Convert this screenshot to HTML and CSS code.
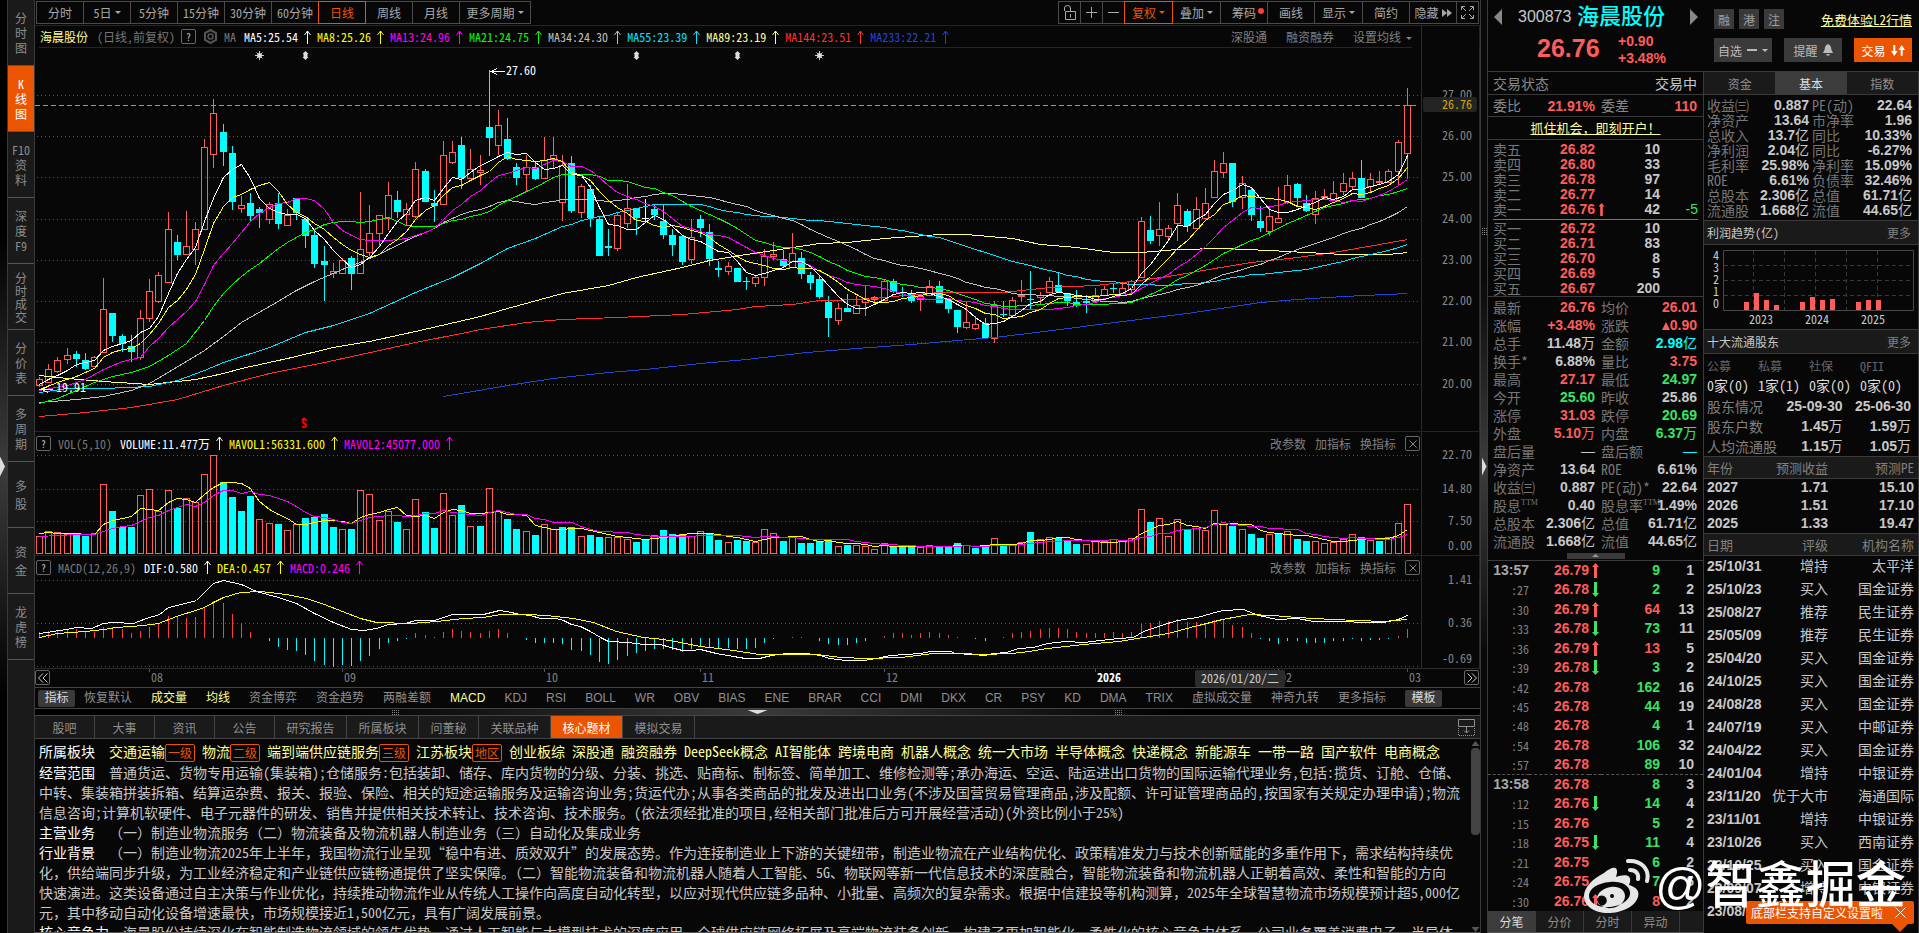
FILE: index.html
```html
<!DOCTYPE html>
<html lang="zh-CN">
<head>
<meta charset="utf-8">
<title>海晨股份 300873</title>
<link rel="stylesheet" href="styles.css">
</head>
<body>
<svg class="defs" aria-hidden="true">
  <symbol id="up" viewBox="0 0 7 14"><path d="M3.5 14V1M.5 5l3-4 3 4" fill="none" stroke="currentColor"/></symbol>
  <symbol id="fat-up" viewBox="0 0 7 15"><path d="M3.5 0 7 4H5v11H2V4H0z" fill="currentColor"/></symbol>
  <symbol id="fat-down" viewBox="0 0 7 15"><path d="M3.5 15 7 11H5V0H2v11H0z" fill="currentColor"/></symbol>
  <symbol id="cross" viewBox="0 0 14 14"><path d="M3.5 3.5l7 7m0-7l-7 7" fill="none" stroke="currentColor"/></symbol>
  <symbol id="grip" viewBox="0 0 8 5"><path d="M0 .5h8M0 2.5h8M0 4.5h8" stroke="currentColor" stroke-dasharray="1 1"/></symbol>
</svg>
<div class="app">
  <div class="gutter"><i class="pull"></i></div>
  <nav class="side">
    <button>分<br>时<br>图</button>
    <button class="on">K<br>线<br>图</button>
    <button>F10<br>资<br>料</button>
    <button>深<br>度<br>F9</button>
    <button class="tight">分<br>时<br>成<br>交</button>
    <button>分<br>价<br>表</button>
    <button>多<br>周<br>期</button>
    <button class="loose">多<br>股</button>
    <button class="loose">资<br>金</button>
    <button>龙<br>虎<br>榜</button>
  </nav>

  <main class="main">
    <div class="toolbar">
      <div class="btns periods">
        <button>分时</button><button>5日 <i class="caret"></i></button><button>5分钟</button><button>15分钟</button><button>30分钟</button><button>60分钟</button><button class="on">日线</button><button>周线</button><button>月线</button><button class="wide">更多周期 <i class="caret"></i></button>
      </div>
      <div class="btns tools">
        <button class="sq" aria-label="解锁"><svg width="14" height="16" viewBox="0 0 14 16" fill="none" stroke="currentColor"><path d="M1.5 6V3Q1.5.5 4.5.5T7.5 3V6M2.5 6.5H12.5V14.5H2.5zM7.5 9V12.5"/></svg></button><button class="sq" aria-label="放大"><svg width="11" height="11" viewBox="0 0 11 11" stroke="currentColor"><path d="M5.5 0v11M0 5.5h11"/></svg></button><button class="sq" aria-label="缩小"><svg width="11" height="11" viewBox="0 0 11 11" stroke="currentColor"><path d="M0 5.5h11"/></svg></button><button class="on mid">复权 <i class="caret"></i></button><button class="mid">叠加 <i class="caret"></i></button><button class="dot">筹码</button><button>画线</button><button class="mid">显示 <i class="caret"></i></button><button>简约</button><button>隐藏<svg width="10" height="8" viewBox="0 0 10 8"><path d="M0 0l5 4-5 4zM5 0l5 4-5 4z" fill="currentColor"/></svg></button><button class="sq" aria-label="全屏"><svg width="13" height="13" viewBox="0 0 13 13" fill="none" stroke="currentColor"><path d="M.5 4V.5H4M9 .5h3.5V4M12.5 9v3.5H9M4 12.5H.5V9M1 1l4 4M12 1L8 5M12 12L8 8M1 12l4-4"/></svg></button>
      </div>
    </div>

    <div class="bar">
      <div class="legend ruled">
        <b class="name">海晨股份</b><span class="mute">(日线,前复权)</span><button class="ask">?</button>
        <svg class="gear" width="15" height="15" viewBox="0 0 15 15" fill="none" stroke="currentColor"><path d="M7.5 1l5.500 3v7l-5.500 3L2 11V4z" stroke-width="2"/><circle cx="7.5" cy="7.5" r="2.5" stroke-width="1.5"/></svg>
        <span class="mute ma">MA</span>
        <span class="v white">MA5:25.54<svg><use href="#up"/></svg></span><span class="v yellow">MA8:25.26<svg><use href="#up"/></svg></span><span class="v magenta">MA13:24.96<svg><use href="#up"/></svg></span><span class="v lime">MA21:24.75<svg><use href="#up"/></svg></span><span class="v silver">MA34:24.30<svg><use href="#up"/></svg></span><span class="v aqua">MA55:23.39<svg><use href="#up"/></svg></span><span class="v cream">MA89:23.19<svg><use href="#up"/></svg></span><span class="v scarlet">MA144:23.51<svg><use href="#up"/></svg></span><span class="v blue">MA233:22.21<svg><use href="#up"/></svg></span>
        <div class="links first"><a href="#">深股通</a><a href="#">融资融券</a><a href="#">设置均线<i class="caret"></i></a></div>
      </div>
      <div class="axis"></div>
    </div>
    <svg id="price" class="plot grow" role="img" aria-label="日K线"></svg>

    <div class="bar line">
      <div class="legend">
        <button class="ask">?</button><span class="mute vt">VOL(5,10)</span>
        <span class="v white">VOLUME:11.477万<svg><use href="#up"/></svg></span><span class="v yellow">MAVOL1:56331.600<svg><use href="#up"/></svg></span><span class="v magenta">MAVOL2:45077.000<svg><use href="#up"/></svg></span>
        <div class="links"><a href="#">改参数</a><a href="#">加指标</a><a href="#">换指标</a><button class="ask" aria-label="关闭"><svg width="14" height="14"><use href="#cross"/></svg></button></div>
      </div>
      <div class="axis"></div>
    </div>
    <svg id="volume" class="plot vol" role="img" aria-label="成交量"></svg>

    <div class="bar line">
      <div class="legend">
        <button class="ask">?</button><span class="mute vt">MACD(12,26,9)</span>
        <span class="v white">DIF:0.580<svg><use href="#up"/></svg></span><span class="v yellow">DEA:0.457<svg><use href="#up"/></svg></span><span class="v magenta">MACD:0.246<svg><use href="#up"/></svg></span>
        <div class="links"><a href="#">改参数</a><a href="#">加指标</a><a href="#">换指标</a><button class="ask" aria-label="关闭"><svg width="14" height="14"><use href="#cross"/></svg></button></div>
      </div>
      <div class="axis"></div>
    </div>
    <svg id="macd" class="plot macd" role="img" aria-label="MACD"></svg>

    <div class="dates">
      <svg id="dates" class="plot"></svg>
      <button class="ask prev" aria-label="向前"><svg width="14" height="14" fill="none" stroke="currentColor"><path d="M7 2.5L2.5 7 7 11.5M11.5 2.5L7 7l4.5 4.5"/></svg></button>
      <button class="ask next" aria-label="向后"><svg width="14" height="14" fill="none" stroke="currentColor"><path d="M7 2.5L11.5 7 7 11.5M2.5 2.5L7 7l-4.5 4.5"/></svg></button>
    </div>

    <div class="indic">
      <button class="chip">指标</button><a href="#" class="first">恢复默认</a><a href="#" class="hot">成交量</a><a href="#" class="hot">均线</a><a href="#">资金博弈</a><a href="#">资金趋势</a><a href="#">两融差额</a><a href="#" class="hot">MACD</a><a href="#">KDJ</a><a href="#">RSI</a><a href="#">BOLL</a><a href="#">WR</a><a href="#">OBV</a><a href="#">BIAS</a><a href="#">ENE</a><a href="#">BRAR</a><a href="#">CCI</a><a href="#">DMI</a><a href="#">DKX</a><a href="#">CR</a><a href="#">PSY</a><a href="#">KD</a><a href="#">DMA</a><a href="#">TRIX</a><a href="#">虚拟成交量</a><a href="#">神奇九转</a><a href="#">更多指标</a><button class="chip">模板</button>
    </div>

    <div class="hsplit"><svg width="8" height="5"><use href="#grip"/></svg><i></i><svg width="8" height="5"><use href="#grip"/></svg></div>

    <div class="tabs">
      <button>股吧</button><button>大事</button><button>资讯</button><button>公告</button><button class="w">研究报告</button><button class="w">所属板块</button><button>问董秘</button><button class="w">关联品种</button><button class="w on">核心题材</button><button class="w">模拟交易</button>
      <svg class="dock" width="17" height="17" viewBox="0 0 17 17" fill="none" stroke="currentColor"><path d="M.5.5h16v7H.5zM8.5 7.5V14M6 11.5l2.5 2.5 2.5-2.5"/><path d="M.5 9v7.5h16V9" stroke-dasharray="1 1"/></svg>
    </div>

    <section class="info">
      <div class="lines">
        <p class="cream"><b>所属板块</b>交通运输<em>一级</em> 物流<em>二级</em> 端到端供应链服务<em>三级</em> 江苏板块<em>地区</em> 创业板综 深股通 融资融券 DeepSeek概念 AI智能体 跨境电商 机器人概念 统一大市场 半导体概念 快递概念 新能源车 一带一路 国产软件 电商概念</p>
        <p><b>经营范围</b>普通货运、货物专用运输(集装箱);仓储服务:包括装卸、储存、库内货物的分级、分装、挑选、贴商标、制标签、简单加工、维修检测等;承办海运、空运、陆运进出口货物的国际运输代理业务,包括:揽货、订舱、仓储、<br>中转、集装箱拼装拆箱、结算运杂费、报关、报验、保险、相关的短途运输服务及运输咨询业务;货运代办;从事各类商品的批发及进出口业务(不涉及国营贸易管理商品,涉及配额、许可证管理商品的,按国家有关规定办理申请);物流<br>信息咨询;计算机软硬件、电子元器件的研发、销售并提供相关技术转让、技术咨询、技术服务。(依法须经批准的项目,经相关部门批准后方可开展经营活动)(外资比例小于25%)</p>
        <p><b>主营业务</b>（一）制造业物流服务（二）物流装备及物流机器人制造业务（三）自动化及集成业务</p>
        <p><b>行业背景</b>（一）制造业物流2025年上半年，我国物流行业呈现“稳中有进、质效双升”的发展态势。作为连接制造业上下游的关键纽带，制造业物流在产业结构优化、政策精准发力与技术创新赋能的多重作用下，需求结构持续优<br>化，供给端同步升级，为工业经济稳定和产业链供应链畅通提供了坚实保障。（二）智能物流装备和物流机器人随着人工智能、5G、物联网等新一代信息技术的深度融合，智能物流装备和物流机器人正朝着高效、柔性和智能的方向<br>快速演进。这类设备通过自主决策与作业优化，持续推动物流作业从传统人工操作向高度自动化转型，以应对现代供应链多品种、小批量、高频次的复杂需求。根据中信建投等机构测算，2025年全球智慧物流市场规模预计超5,000亿<br>元，其中移动自动化设备增速最快，市场规模接近1,500亿元，具有广阔发展前景。</p>
        <p><b>核心竞争力</b>海晨股份持续深化在智能制造物流领域的领先优势，通过人工智能与大模型技术的深度应用、全球供应链网络拓展及高端物流装备创新，构建了更加智能化、柔性化的核心竞争力体系。公司业务覆盖消费电子、半导体</p>
      </div>
      <div class="scroll"><i class="sup"></i><i class="thumb"></i><i class="sdn"></i></div>
    </section>
  </main>

  <div class="vsplit"><svg width="5" height="8" viewBox="0 0 5 8"><path d="M0 .5h5M0 2.5h5M0 4.5h5M0 6.5h5" stroke="#888" stroke-dasharray="1 1"/></svg><i class="pull"></i></div>

  <aside class="quote">
    <header class="head">
      <div class="title">
        <button class="arrow l" aria-label="上一只"></button><span class="code">300873</span><h1>海晨股份</h1><button class="arrow r" aria-label="下一只"></button>
        <strong class="last">26.76</strong>
        <div class="chg"><span>+0.90</span><span>+3.48%</span></div>
      </div>
      <div class="acts">
        <div class="row"><button class="tag">融</button><button class="tag">港</button><button class="tag">注</button><a href="#">免费体验L2行情</a></div>
        <div class="row two"><button>自选<svg width="10" height="2"><path d="M0 1h10" stroke="currentColor" stroke-width="2"/></svg><i class="caret"></i></button><button>提醒<svg width="10" height="12" viewBox="0 0 10 12"><path d="M5 0C7.5 1 8.300 3 8.300 5.500L10 9H0l1.700-3.500C1.700 3 2.500 1 5 0zM3.500 10h3v1.500h-3z" fill="currentColor"/></svg></button><button class="trade">交易<svg width="14" height="11" viewBox="0 0 14 11"><path d="M2.300 0h2v6h2.300L3.300 11 0 6h2.300zM9.700 11h2V5H14l-3.300-5-3.300 5h2.300z" fill="currentColor"/></svg></button></div>
      </div>
    </header>

    <div class="cols">
      <section class="left">
        <div class="state"><span>交易状态</span><span class="lite">交易中</span></div>
        <div class="state pair"><span>委比</span><b class="red">21.91%</b><span>委差</span><b class="red">110</b></div>
        <div class="ad"><a href="#">抓住机会，即刻开户！</a></div>
        <div class="book">
          <table>
            <tr><th>卖五</th><td class="red">26.82</td><td></td><td>10</td><td></td></tr>
            <tr><th>卖四</th><td class="red">26.80</td><td></td><td>33</td><td></td></tr>
            <tr><th>卖三</th><td class="red">26.78</td><td></td><td>97</td><td></td></tr>
            <tr><th>卖二</th><td class="red">26.77</td><td></td><td>14</td><td></td></tr>
            <tr><th>卖一</th><td class="red">26.76</td><td class="red"><svg width="7" height="13"><use href="#fat-up"/></svg></td><td>42</td><td class="green thin">-5</td></tr>
          </table>
          <table>
            <tr><th>买一</th><td class="red">26.72</td><td></td><td>10</td><td></td></tr>
            <tr><th>买二</th><td class="red">26.71</td><td></td><td>83</td><td></td></tr>
            <tr><th>买三</th><td class="red">26.70</td><td></td><td>8</td><td></td></tr>
            <tr><th>买四</th><td class="red">26.69</td><td></td><td>5</td><td></td></tr>
            <tr><th>买五</th><td class="red">26.67</td><td></td><td>200</td><td></td></tr>
          </table>
        </div>
        <table class="stats">
          <tr><th>最新</th><td class="red">26.76</td><th>均价</th><td class="red">26.01</td></tr>
          <tr><th>涨幅</th><td class="red">+3.48%</td><th>涨跌</th><td class="red"><svg width="8" height="8"><path d="M4 0l4 8H0z" fill="currentColor"/></svg>0.90</td></tr>
          <tr><th>总手</th><td>11.48<u>万</u></td><th>金额</th><td class="cyan">2.98<u>亿</u></td></tr>
          <tr><th>换手*</th><td>6.88%</td><th>量比</th><td class="red">3.75</td></tr>
          <tr><th>最高</th><td class="red">27.17</td><th>最低</th><td class="green">24.97</td></tr>
          <tr><th>今开</th><td class="green">25.60</td><th>昨收</th><td>25.86</td></tr>
          <tr><th>涨停</th><td class="red">31.03</td><th>跌停</th><td class="green">20.69</td></tr>
          <tr><th>外盘</th><td class="red">5.10<u>万</u></td><th>内盘</th><td class="green">6.37<u>万</u></td></tr>
          <tr><th>盘后量</th><td><u>—</u></td><th>盘后额</th><td class="cyan"><u>—</u></td></tr>
          <tr><th>净资产</th><td>13.64</td><th>ROE</th><td>6.61%</td></tr>
          <tr><th>收益㈢</th><td>0.887</td><th>PE(动)*</th><td>22.64</td></tr>
          <tr><th>股息<sup>TTM</sup></th><td>0.40</td><th>股息率<sup>TTM</sup></th><td>1.49%</td></tr>
          <tr><th>总股本</th><td>2.306<u>亿</u></td><th>总值</th><td>61.71<u>亿</u></td></tr>
          <tr><th>流通股</th><td>1.668<u>亿</u></td><th>流值</th><td>44.65<u>亿</u></td></tr>
        </table>
        <div class="fold"><button aria-label="收起"><i></i></button></div>
        <table class="ticks">
          <tr><th class="hr">13:57</th><td class="red">26.79</td><td class="red"><svg width="7" height="15"><use href="#fat-up"/></svg></td><td class="green">9</td><td>1</td></tr>
          <tr><th>:27</th><td class="red">26.78</td><td class="green"><svg width="7" height="15"><use href="#fat-down"/></svg></td><td class="green">2</td><td>2</td></tr>
          <tr><th>:30</th><td class="red">26.79</td><td class="red"><svg width="7" height="15"><use href="#fat-up"/></svg></td><td class="red">64</td><td>13</td></tr>
          <tr><th>:33</th><td class="red">26.78</td><td class="green"><svg width="7" height="15"><use href="#fat-down"/></svg></td><td class="green">73</td><td>11</td></tr>
          <tr><th>:36</th><td class="red">26.79</td><td class="red"><svg width="7" height="15"><use href="#fat-up"/></svg></td><td class="red">13</td><td>5</td></tr>
          <tr><th>:39</th><td class="red">26.78</td><td class="green"><svg width="7" height="15"><use href="#fat-down"/></svg></td><td class="green">3</td><td>2</td></tr>
          <tr><th>:42</th><td class="red">26.78</td><td></td><td class="green">162</td><td>16</td></tr>
          <tr><th>:45</th><td class="red">26.78</td><td></td><td class="green">44</td><td>19</td></tr>
          <tr><th>:48</th><td class="red">26.78</td><td></td><td class="green">4</td><td>1</td></tr>
          <tr><th>:54</th><td class="red">26.78</td><td></td><td class="green">106</td><td>32</td></tr>
          <tr><th>:57</th><td class="red">26.78</td><td></td><td class="green">89</td><td>10</td></tr>
          <tr class="cut"><th class="hr">13:58</th><td class="red">26.78</td><td></td><td class="green">8</td><td>3</td></tr>
          <tr><th>:12</th><td class="red">26.76</td><td class="green"><svg width="7" height="15"><use href="#fat-down"/></svg></td><td class="green">14</td><td>4</td></tr>
          <tr><th>:15</th><td class="red">26.76</td><td></td><td class="green">5</td><td>2</td></tr>
          <tr><th>:18</th><td class="red">26.75</td><td class="green"><svg width="7" height="15"><use href="#fat-down"/></svg></td><td class="green">11</td><td>4</td></tr>
          <tr><th>:21</th><td class="red">26.75</td><td></td><td class="green">6</td><td>2</td></tr>
          <tr><th>:24</th><td class="red">26.75</td><td></td><td class="green">7</td><td>6</td></tr>
          <tr><th>:30</th><td class="red">26.76</td><td class="red"><svg width="7" height="15"><use href="#fat-up"/></svg></td><td class="red">8</td><td>2</td></tr>
        </table>
        <div class="foot"><button class="on">分笔</button><button>分价</button><button>分时</button><button>异动</button></div>
      </section>

      <section class="right">
        <div class="seg"><button>资金</button><button class="on">基本</button><button>指数</button></div>
        <table class="stats fin">
          <tr><th>收益㈢</th><td>0.887</td><th>PE(动)</th><td>22.64</td></tr>
          <tr><th>净资产</th><td>13.64</td><th>市净率</th><td>1.96</td></tr>
          <tr><th>总收入</th><td>13.7<u>亿</u></td><th>同比</th><td>10.33%</td></tr>
          <tr><th>净利润</th><td>2.04<u>亿</u></td><th>同比</th><td>-6.27%</td></tr>
          <tr><th>毛利率</th><td>25.98%</td><th>净利率</th><td>15.09%</td></tr>
          <tr><th>ROE</th><td>6.61%</td><th>负债率</th><td>32.46%</td></tr>
          <tr><th>总股本</th><td>2.306<u>亿</u></td><th>总值</th><td>61.71<u>亿</u></td></tr>
          <tr><th>流通股</th><td>1.668<u>亿</u></td><th>流值</th><td>44.65<u>亿</u></td></tr>
        </table>
        <div class="cap"><span>利润趋势(亿)</span><a href="#">更多</a></div>
        <svg class="profit" viewBox="0 0 214 84" font-size="12">
          <g fill="none" stroke="#484848"><path d="M19.5 5.5h190v60h-190z"/><path d="M20 20.5h189M20 35.5h189M20 50.5h189M49.5 6v59M80.5 6v59M111.5 6v59M142.5 6v59M173.5 6v59" stroke-dasharray="4 3" stroke="#3a3a3a"/></g>
          <path fill="#ff5c5c" d="M40 57h5v8h-5zM50 48h5v17h-5zM60 55h5v10h-5zM70 60h5v5h-5zM96 57h5v8h-5zM106 52h5v13h-5zM116 55h5v10h-5zM126 54h5v11h-5zM152 57h5v8h-5zM162 55h5v10h-5zM172 55h5v10h-5z"/>
          <g fill="#c8c8c8" text-anchor="middle"><text x="12" y="15">4</text><text x="12" y="27">3</text><text x="12" y="39">2</text><text x="12" y="51">1</text><text x="12" y="63">0</text><text x="57" y="79">2023</text><text x="113" y="79">2024</text><text x="169" y="79">2025</text></g>
        </svg>
        <div class="cap"><span>十大流通股东</span><a href="#">更多</a></div>
        <dl class="funds"><div><dt>公募</dt><dd>0家(0)</dd></div><div><dt>私募</dt><dd>1家(1)</dd></div><div><dt>社保</dt><dd>0家(0)</dd></div><div><dt>QFII</dt><dd>0家(0)</dd></div></dl>
        <table class="holders">
          <tr><th>股东情况</th><td>25-09-30</td><td>25-06-30</td></tr>
          <tr><th>股东户数</th><td>1.45<u>万</u></td><td>1.59<u>万</u></td></tr>
          <tr><th>人均流通股</th><td>1.15<u>万</u></td><td>1.05<u>万</u></td></tr>
        </table>
        <table class="list">
          <thead><tr><th>年份</th><th>预测收益</th><th>预测PE</th></tr></thead>
          <tbody><tr><td>2027</td><td>1.71</td><td>15.10</td></tr><tr><td>2026</td><td>1.51</td><td>17.10</td></tr><tr><td>2025</td><td>1.33</td><td>19.47</td></tr></tbody>
        </table>
        <table class="list rate">
          <thead><tr><th>日期</th><th>评级</th><th>机构名称</th></tr></thead>
          <tbody>
          <tr><td>25/10/31</td><td>增持</td><td>太平洋</td></tr><tr><td>25/10/23</td><td>买入</td><td>国金证券</td></tr><tr><td>25/08/27</td><td>推荐</td><td>民生证券</td></tr><tr><td>25/05/09</td><td>推荐</td><td>民生证券</td></tr><tr><td>25/04/20</td><td>买入</td><td>国金证券</td></tr><tr><td>24/10/25</td><td>买入</td><td>国金证券</td></tr><tr><td>24/08/28</td><td>买入</td><td>国金证券</td></tr><tr><td>24/07/19</td><td>买入</td><td>中邮证券</td></tr><tr><td>24/04/22</td><td>买入</td><td>国金证券</td></tr><tr><td>24/01/04</td><td>增持</td><td>中银证券</td></tr><tr><td>23/11/20</td><td>优于大市</td><td>海通国际</td></tr><tr><td>23/11/01</td><td>增持</td><td>中银证券</td></tr><tr><td>23/10/26</td><td>买入</td><td>西南证券</td></tr><tr><td>23/10/25</td><td>买入</td><td>国金证券</td></tr><tr><td>23/09/07</td><td>增持</td><td>中银证券</td></tr><tr><td>23/08/</td><td></td><td></td></tr>
          </tbody>
        </table>
      </section>
    </div>
    <div class="tip"><span>底部栏支持自定义设置啦</span><button aria-label="关闭"><svg width="11" height="11"><path d="M.5.5l10 10m0-10l-10 10" stroke="currentColor"/></svg></button></div>
    <div class="mark">
      <svg width="68" height="56" viewBox="0 0 68 56" fill="none"><path fill="#e6e6e6" fill-rule="evenodd" d="M21 15C28 9 35 7 34 15l-1 4c7-3 16-3 14 5l-1 3c7 2 11 6 9 12C52 49 38 55 25 55 11 55 1 48 1 38 1 30 9 21 21 15zM27 24C14 25 6 31 6 38s9 12 21 11 21-8 20-15-9-11-20-10zM28 29c8-1 14 3 14 9s-6 11-13 12-15-3-15-9 6-11 14-12zM21 38a5 5 0 1 0 .1 9 5 5 0 0 0-.1-9zM29 36a2 2 0 1 0 .1 4 2 2 0 0 0-.1-4z"/><path stroke="#e6e6e6" stroke-width="4" stroke-linecap="round" d="M45 3c13-1 22 8 19 20M47 12c6 0 9 4 8 9"/></svg>
      <span>@智鑫掘金</span>
    </div>
  </aside>
</div>
<script src="chart.js"></script>
</body>
</html>
```
FILE: styles.css
```css
* { box-sizing: border-box; }
:root {
  --bg: #070707;
  --panel: #1a1a1a;
  --line: #3a3a3a;
  --faint: #242424;
  --text: #c8c8c8;
  --mute: #808080;
  --red: #ff5c5c;
  --green: #39e365;
  --orange: #eb5502;
  --cjk: "Noto Sans Mono CJK SC", "Noto Sans CJK SC", sans-serif;
  --num: "Liberation Sans", "Noto Sans CJK SC", sans-serif;
}
body { margin: 0; background: var(--bg); color: var(--text); font: 12px/15px var(--cjk); }
button { margin: 0; padding: 0; border: 0; background: none; color: inherit; font: inherit; }
a { color: inherit; text-decoration: none; }
h1, p, dl, dd { margin: 0; }
table { border-collapse: collapse; border-spacing: 0; width: 100%; }
th { font-weight: 400; text-align: left; padding: 0; }
td { padding: 0; }
u { text-decoration: none; font-weight: 400; }
.defs { position: absolute; width: 0; height: 0; }

.app { display: grid; grid-template-columns: 8px 27px minmax(0, 1fr) 8px 431px; height: 100vh; overflow: hidden; }

.gutter { display: flex; align-items: center; border-right: 1px solid var(--line); background: linear-gradient(#000 25%, #3c3c3c 50%, #000 75%); }
.pull { width: 5px; height: 20px; background: #ddd; clip-path: polygon(0 0, 100% 50%, 0 100%); }

.side { background: var(--panel); border-right: 1px solid var(--line); }
.side button { display: block; width: 100%; height: 66px; border-bottom: 1px solid #555; color: #8c8c8c; line-height: 15px; }
.side .on { background: var(--orange); color: #fff; }
.side .tight { line-height: 13px; }
.side .loose { line-height: 18px; }

.main { display: flex; flex-direction: column; min-width: 0; }
.toolbar { display: flex; justify-content: space-between; height: 26px; padding: 1px 1px 0 0; border-bottom: 1px solid var(--faint); }
.btns { display: flex; height: 23px; padding-left: 1px; }
.btns button { width: 48px; margin-left: -1px; border: 1px solid #4a4a4a; color: #a8a8a8; white-space: nowrap; display: flex; align-items: center; justify-content: center; gap: 3px; }
.periods button:first-child { margin-left: 0; }
.btns .wide { width: 72px; }
.btns .sq { width: 23px; }
.btns .mid { width: 49px; }
.btns .on { border-color: var(--orange); color: var(--orange); position: relative; }
.btns .dot { position: relative; }
.dot::after { content: ""; position: absolute; right: 3px; top: 6px; width: 6px; height: 6px; border-radius: 50%; background: #ff3b3b; }
.caret { display: inline-block; border: 3px solid transparent; border-top-color: currentColor; border-bottom: 0; vertical-align: middle; }

.bar { display: flex; height: 22px; flex: none; }
.line { border-top: 1px solid var(--faint); height: 24px; }
.legend { flex: 1; display: flex; align-items: center; min-width: 0; padding-left: 1px; white-space: nowrap; }
.line .legend { padding-bottom: 1px; }
.axis { width: 59px; border-left: 1px solid #2c2c2c; border-right: 1px solid var(--faint); }
.ruled { border-bottom: 1px solid var(--faint); margin: 0 9px 0 4px; }
.name { color: #ffff99; font-weight: 400; margin-right: 9px; }
.mute { color: #777; }
.ask { width: 15px; height: 15px; border: 1px solid #666; border-radius: 2px; color: #ccc; font-size: 10px; line-height: 13px; display: grid; place-items: center; flex: none; }
.ruled .ask { margin: 0 7px 0 6px; }
.links .ask { color: #888; }
.gear { color: #555; margin-right: 6px; }
.ma { margin-right: 8px; }
.vt { margin: 0 8px 0 7px; }
.v { display: inline-flex; align-items: center; margin-right: 6px; }
.v svg { width: 7px; height: 14px; margin-left: 6px; }
.links { margin-left: auto; display: flex; align-items: center; gap: 9px; color: #808080; padding-right: 1px; }
.links.first { gap: 19px; padding-right: 0; }
.links .caret { margin-left: 5px; }
.white { color: #fff; } .yellow { color: #ff0; } .magenta { color: #f0f; } .lime { color: #0f0; }
.silver { color: #c0c0c0; } .aqua { color: #00e5ff; } .cream { color: #ffff99; } .scarlet { color: #ff3030; } .blue { color: #2146d0; }
.red { color: var(--red); } .green { color: var(--green); } .cyan { color: #0ff; } .lite { color: var(--text); }

.plot { display: block; width: 100%; flex: none; overflow: visible; font: 12px var(--cjk); }
.plot.grow { flex: 1 1 0; height: 0; min-height: 0; }
.plot.vol { height: 100px; }
.plot.macd { height: 89px; }
.dates { position: relative; height: 19px; flex: none; border-top: 1px solid #2c2c2c; }
.dates .plot { height: 18px; }
.dates .ask { position: absolute; top: 1px; left: 0; }
.dates .next { left: auto; right: 1px; }

.indic { display: flex; align-items: center; gap: 19px; height: 21px; flex: none; padding-left: 3px; border-top: 1px solid #444; color: #909090; font-family: var(--num); white-space: nowrap; }
.indic .first { margin-left: -10px; }
.indic .hot { color: #ffff99; }
.chip { width: 37px; height: 17px; background: #3a3a3a; border-radius: 2px; color: #ddd; }

.hsplit { display: flex; align-items: center; justify-content: space-between; height: 8px; flex: none; padding: 0 357px; color: #888; border-top: 1px solid #444; border-bottom: 1px solid #444; background: linear-gradient(90deg, #000 20%, #3a3a3a 50%, #000 80%); }
.hsplit i { width: 20px; height: 4px; background: #ddd; clip-path: polygon(0 0, 100% 0, 50% 100%); }

.tabs { display: flex; align-items: stretch; height: 23px; flex: none; background: var(--panel); border-bottom: 1px solid #444; color: #909090; }
.tabs button { width: 60px; border-right: 1px solid #444; }
.tabs .w { width: 72px; }
.tabs .on { background: var(--orange); color: #fff; }
.dock { margin: 3px 5px 0 auto; }

.info { height: 194px; flex: none; display: flex; overflow: hidden; border-bottom: 1px solid #555; font-size: 14px; line-height: 20px; padding: 2px 0 0 4px; white-space: nowrap; }
.lines { flex: 1; min-width: 0; overflow: hidden; }
.lines b { font-weight: 400; color: #fff; margin-right: 14px; }
.lines em { display: inline-block; font-style: normal; font-size: 12px; line-height: 16px; height: 18px; padding: 0 2px; border: 1px solid var(--orange); border-radius: 2px; color: var(--orange); vertical-align: middle; }
.scroll { width: 9px; display: flex; flex-direction: column; align-items: center; gap: 2px; }
.scroll i { width: 8px; height: 5px; background: #555; clip-path: polygon(50% 0, 100% 100%, 0 100%); }
.scroll .thumb { height: 87px; width: 9px; border-radius: 4px; clip-path: none; background: #444; }
.scroll .sdn { margin-top: auto; clip-path: polygon(0 0, 100% 0, 50% 100%); }

.vsplit { display: flex; flex-direction: column; align-items: center; justify-content: center; gap: 221px; border: solid var(--line); border-width: 0 1px; background: linear-gradient(#0a0a0a 30%, #3c3c3c 50%, #0a0a0a 70%); }
.vsplit svg { margin-top: -229px; }

.quote { position: relative; display: flex; flex-direction: column; min-height: 0; }
.head { display: grid; grid-template-columns: 216px 1fr; height: 71px; flex: none; }
.title { display: grid; grid-template-columns: 30px 54px 1fr 30px; align-items: center; grid-template-rows: 34px 34px; }
.arrow { width: 8px; height: 16px; margin: 0 6px; background: #888; }
.arrow.l { clip-path: polygon(0 50%, 100% 0, 100% 100%); }
.arrow.r { justify-self: end; clip-path: polygon(0 0, 100% 50%, 0 100%); }
.code { font: 16px var(--num); }
.title h1 { font: 500 22px/32px var(--num); color: #0ff; padding-left: 5px; }
.last { grid-column: 1 / 3; grid-row: 2; font: 700 25px/28px var(--num); color: var(--red); padding-left: 49px; padding-bottom: 6px; }
.chg { grid-column: 3 / 5; grid-row: 2; padding-left: 46px; font: 700 14px/17px var(--num); color: var(--red); display: grid; padding-bottom: 2px; }
.acts { padding: 9px 7px 0 10px; }
.row { display: flex; gap: 5px; align-items: center; }
.row a { margin-left: auto; color: #ffff99; text-decoration: underline; font-size: 13px; }
.row button { height: 24px; width: 58px; background: var(--line); color: #bbb; display: flex; align-items: center; justify-content: center; gap: 5px; }
.row .tag { width: 20px; height: 20px; color: #a0a0a0; }
.row.two { justify-content: space-between; margin-top: 9px; }
.row .trade { background: var(--orange); color: #fff; }

.cols { display: grid; grid-template-columns: 216px minmax(0, 1fr); flex: 1; min-height: 0; }
.left { display: flex; flex-direction: column; border-right: 1px solid var(--line); min-height: 0; }
.state { display: flex; justify-content: space-between; align-items: center; height: 23px; padding: 0 6px 0 5px; border-top: 1px solid var(--line); font-size: 14px; color: #888; }
.pair { display: grid; grid-template-columns: 28px 74px 34px 1fr; height: 22px; }
.pair b { font: 700 14px var(--num); text-align: right; }
.pair span:nth-of-type(2) { padding-left: 6px; }
.ad { height: 23px; border-top: 1px solid var(--line); text-align: center; font-size: 13px; line-height: 22px; color: #ffff99; }
.ad a { text-decoration: underline; }
.book { border-top: 1px solid var(--line); padding: 2px 5px 0; }
.book table { table-layout: fixed; }
.book table + table { border-top: 1px solid #777; border-collapse: separate; margin-top: 2px; padding-top: 1px; }
.book th, .stats th { font-size: 14px; line-height: 15px; color: #777; white-space: nowrap; }
.book td { font: 700 14px/15px var(--num); text-align: right; }
.book tr { height: 15px; }
.book tr > :nth-child(1) { width: 42px; } .book tr > :nth-child(2) { width: 60px; }
.book tr > :nth-child(3) { width: 12px; } .book tr > :nth-child(4) { width: 53px; }
.book svg, .ticks svg { display: block; margin: 0 auto; }
.book .thin { font-weight: 400; }

.stats { table-layout: fixed; }
.left .stats { border-top: 1px solid var(--line); border-collapse: separate; padding: 1px 6px 1px 5px; }
.stats tr { height: 18px; }
.stats td { font: 700 14px/15px var(--num); text-align: right; white-space: nowrap; }
.stats tr > :nth-child(1) { width: 44px; } .stats tr > :nth-child(2) { width: 58px; }
.stats tr > :nth-child(3) { width: 52px; padding-left: 6px; }
sup { font: 8px/8px "Liberation Serif", serif; vertical-align: 6px; }
.fold { height: 9px; display: grid; place-items: center; }
.fold button { width: 58px; height: 6px; background: var(--line); display: grid; place-items: center; }
.fold i { width: 7px; height: 3px; background: #999; clip-path: polygon(50% 0, 100% 100%, 0 100%); }
.ticks { flex: 1; border-top: 1px solid var(--line); table-layout: fixed; }
.ticks th { font-size: 12px; color: #808080; text-align: right; }
.ticks .hr { font: 700 14px/15px var(--num); color: #a8a8a8; }
.ticks td { font: 700 14px/15px var(--num); text-align: right; }
.ticks tr { height: 19px; }
.ticks tr > :nth-child(1) { width: 41px; } .ticks tr > :nth-child(2) { width: 60px; }
.ticks tr > :nth-child(3) { width: 12px; } .ticks tr > :nth-child(4) { width: 59px; }
.ticks tr > :nth-child(5) { padding-right: 9px; }
.ticks .cut { border-top: 1px dashed #555; }
.foot { display: flex; height: 22px; flex: none; background: var(--panel); color: #909090; border-bottom: 1px solid #555; }
.foot button { width: 48px; border-right: 1px solid var(--line); }
.foot .on { background: #3c3c3c; color: #ddd; }

.right { border-right: 1px solid var(--line); overflow: hidden; min-height: 0; }
.seg { display: grid; grid-template-columns: repeat(3, 1fr); height: 24px; border: solid var(--line); border-width: 1px 0; background: var(--panel); color: #909090; }
.seg .on { background: #3c3c3c; color: #ddd; }
.right .fin { border-collapse: separate; padding: 3px 6px 2px 3px; }
.fin tr { height: 15px; }
.fin tr > :nth-child(3) { padding-left: 3px; }
.cap { display: flex; justify-content: space-between; align-items: center; height: 25px; padding: 0 7px 0 3px; background: var(--panel); border: solid var(--line); border-width: 1px 0; }
.cap a { color: var(--mute); }
.profit { display: block; width: 100%; font-family: var(--cjk); }
.funds { display: grid; grid-template-columns: repeat(4, 51px); padding: 4px 0 0 3px; }
.funds dt { font-size: 12px; color: #666; line-height: 16px; }
.funds dd { font-size: 14px; color: #ddd; line-height: 22px; }
.holders { table-layout: fixed; border-collapse: separate; padding: 0 7px 0 3px; font-size: 14px; }
.holders th { color: #808080; white-space: nowrap; width: 67px; }
.holders td { font: 700 14px/15px var(--num); text-align: right; }
.holders tr { height: 20px; }
.list { table-layout: fixed; font: 700 14px/15px var(--num); }
.list thead { background: var(--panel); font: 13px/15px var(--cjk); color: var(--mute); border: solid var(--line); border-width: 1px 0; }
.list tr { height: 18px; }
.list thead tr { height: 22px; }
.list tr > * { text-align: right; }
.list tr > :nth-child(1) { text-align: left; padding-left: 3px; width: 64px; }
.list tr > :nth-child(2) { width: 60px; }
.list tr > :nth-child(3) { padding-right: 4px; }
.rate tbody tr { height: 23px; }
.rate td + td { font-weight: 400; }

.tip { position: absolute; right: 5px; bottom: 9px; height: 23px; padding: 0 8px 0 5px; display: flex; align-items: center; gap: 12px; background: var(--orange); color: #fff; border-radius: 2px; }
.tip button { display: flex; }
.tip::after { content: ""; position: absolute; right: 6px; top: 100%; border: 8px solid transparent; border-top-color: var(--orange); border-bottom: 0; }
.mark { position: absolute; left: 95px; bottom: 17px; display: flex; align-items: center; gap: 4px; color: #fff; font: 500 50px/60px var(--num); white-space: nowrap; pointer-events: none; }
```
FILE: chart.js
```js
// Candles: direction, high, body top, body bottom, low, in third-pixel chart units.
const CANDLES = `r1131,1138,1156,1162 r1093,1108,1147,1147 r1072,1081,1114,1120 r1044,1067,1078,1092 c1053,1062,1079,1101
c1060,1080,1107,1110 r1068,1072,1098,1102 r834,928,1057,1060 c939,939,1010,1028 c1002,1008,1034,1058
c1005,1038,1058,1088 r930,955,1073,1082 r837,874,955,968 r816,826,905,910 r636,688,848,848
c705,726,767,782 r633,739,763,766 r666,688,748,797 r417,442,688,688 r297,340,463,506
c372,396,458,498 c438,459,608,632 r588,616,626,641 c579,609,650,664 c621,629,641,684
r606,613,658,674 c579,611,674,689 r628,646,676,680 c594,595,640,661 c655,657,710,744
c690,706,794,806 c738,783,797,903 r789,815,822,836 r774,781,821,822 c771,774,824,872
r576,748,820,820 r615,700,757,770 r645,646,700,738 r546,586,655,690 c573,600,638,656
r609,628,643,678 r486,508,650,656 c507,514,608,608 c570,609,620,668 r423,466,613,614
r423,457,487,492 c411,435,536,567 r447,508,535,538 r465,511,517,557 c212,381,414,470
r333,376,437,466 c354,417,479,482 c489,501,536,557 r465,502,523,578 c489,501,539,542
r411,483,535,536 r411,466,479,506 r465,496,607,665 c471,489,635,641 r552,559,638,654
c555,567,656,681 c648,657,770,770 c687,740,744,768 r640,646,745,755 r552,625,670,686
c625,625,656,705 w597,656,659,670 c613,627,645,662 c614,663,705,720 c687,705,735,768
c708,708,788,797 r657,712,779,793 c645,657,686,713 c673,696,777,800 c783,804,812,833
r786,799,815,827 c804,804,846,846 c831,843,849,873 r828,832,851,861 r748,769,832,858
r726,763,769,782 c750,777,800,806 r699,760,803,805 c756,774,824,839 c816,825,851,873
c830,837,893,900 c888,906,956,1011 r909,925,962,977 c882,924,938,938 r888,916,941,943
r857,895,907,948 r888,893,898,912 r837,843,902,904 c837,843,876,881 c861,876,880,893
c870,883,903,911 r885,890,898,933 r840,859,885,888 c843,858,911,911 c900,900,929,941
c930,930,983,1001 r906,967,983,987 r948,972,986,990 c954,969,1014,1018 r904,916,1015,1031
c904,944,947,951 r892,902,946,947 r840,885,890,906 c813,898,899,927 r877,886,892,917
r831,844,877,879 c820,855,877,878 c879,880,903,918 c870,908,919,923 c886,903,909,939
r866,886,903,905 r860,869,886,888 c852,864,867,880 r850,865,879,880 r840,844,868,880
r651,664,832,832 c648,690,725,732 r606,688,707,738 r675,685,710,720 r579,616,670,723
c627,633,678,696 r591,628,686,688 r564,610,655,656 r480,514,593,594 r456,490,518,534
c489,489,608,621 r528,550,592,629 c564,570,647,663 c618,663,686,698 r621,649,695,710
r561,655,667,668 r525,556,608,612 c549,552,594,618 c585,609,635,638 r573,595,643,672
r567,588,591,600 r543,580,602,605 r522,550,575,586 r516,535,560,571 c480,534,594,595
r522,538,560,577 r513,544,548,552 r507,514,548,550 r420,427,514,556 r264,316,461,538`
  .split(/\s+/).map(s => [s[0], ...s.slice(1).split(",").map(Number)]);

const VOLUMES = [349,334,338,344,344,350,341,193,273,321,321,226,208,274,211,264,235,247,163,106,186,231,273,228,298,310,312,331,313,294,291,282,321,328,327,211,223,301,274,306,328,238,279,324,220,286,255,319,318,205,274,297,327,334,345,313,328,321,321,349,345,351,352,351,358,366,358,346,330,342,342,349,334,339,360,367,360,363,367,328,340,363,352,369,369,363,360,379,375,376,379,388,370,379,382,382,382,376,379,382,369,376,384,378,355,376,376,367,336,358,352,355,361,372,374,363,363,358,362,355,268,306,295,349,298,328,325,331,271,313,318,328,342,354,343,339,334,357,363,364,370,367,358,343,351,361,363,352,310,253];

const HIST = [633,630,629,626,627,632,633,618,620,627,636,630,618,609,585,588,591,588,560,541,546,579,606,633,653,660,678,687,690,702,720,732,738,732,735,720,705,684,666,660,656,639,642,648,633,624,630,633,639,630,624,636,653,657,666,666,666,669,687,690,702,723,729,717,705,696,690,684,684,687,693,684,678,681,684,681,684,684,681,666,656,653,648,651,653,660,669,672,672,666,660,653,645,639,639,642,639,633,639,642,651,653,656,660,653,648,639,633,630,627,621,621,627,633,636,636,636,633,637,633,609,606,600,600,594,603,603,606,598,594,612,618,639,656,663,669,660,660,666,666,666,663,660,656,660,657,657,656,645,624];

const DIF = [118,638,200,624,228,619,275,621,310,607,340,604,400,606,440,592,478,579,505,560,545,550,588,538,640,488,670,478,724,490,770,510,835,530,890,548,943,577,1000,604,1054,625,1090,629,1130,621,1165,610,1215,607,1246,599,1303,599,1357,580,1450,580,1475,573,1498,568,1520,570,1560,580,1590,584,1620,591,1670,593,1690,597,1715,609,1742,616,1770,631,1800,651,1826,663,1885,664,1930,669,1980,671,2010,678,2047,688,2075,688,2100,684,2150,697,2200,705,2235,712,2280,712,2315,704,2360,698,2420,697,2460,703,2490,712,2540,718,2590,717,2630,711,2670,702,2760,697,2790,691,2850,692,2865,696,2916,699,2954,703,2981,697,3018,694,3056,683,3099,678,3141,667,3195,661,3249,664,3302,659,3356,653,3399,648,3431,630,3484,613,3532,599,3591,590,3634,577,3666,567,3731,566,3774,583,3832,595,3891,593,3940,601,4031,600,4090,603,4149,604,4196,595,4223,582];
const DEA = [118,650,172,639,256,631,310,626,350,618,430,614,475,606,530,587,586,569,613,558,640,544,670,528,720,514,780,511,860,520,920,532,973,551,1027,572,1080,593,1130,604,1230,606,1310,602,1390,591,1450,589,1500,581,1580,580,1640,584,1720,592,1780,604,1850,631,1930,648,1990,656,2040,665,2100,675,2180,684,2240,695,2280,700,2450,700,2520,709,2600,712,2700,709,2800,698,2880,697,2949,700,3034,697,3088,690,3141,683,3249,670,3356,662,3431,651,3506,636,3570,618,3666,594,3747,580,3816,582,3891,588,3998,596,4149,601,4223,595];

const AVERAGES = [
  [144, "#ff3030", [[0,1249],[5,1238],[10,1221],[15,1197],[20,1155],[25,1120],[31,1087],[37,1052],[41,1026],[46,999],[48,988],[53,968],[57,958],[63,953],[70,942],[76,928],[78,918],[82,912],[85,902],[90,897],[93,888],[98,878],[105,876],[110,863],[115,856],[119,845],[123,829],[128,804],[132,786],[137,772],[141,757],[146,733],[149,720]], true],
  [233, "#2146d0", [[44,1190],[46,1181],[51,1155],[56,1136],[62,1117],[66,1108],[72,1090],[77,1077],[83.5,1056],[89,1045],[95,1034],[100,1021],[104,1012],[108.6,997],[113.7,980],[119,961],[125,940],[133,907],[137,900],[142,889],[149,881]], true],
  [89, "#ffff80", [[0,1127],[3,1136],[7,1143],[12,1153],[17,1138],[20,1120],[22,1104],[27,1075],[32,1042],[36,1025],[41,995],[48,950],[51,925],[57,880],[62,855],[65,832],[70,802],[73,780],[77,763],[80,750],[85,730],[88,727],[92,716],[98,703],[101,703],[106,715],[109,733],[113,743],[117,756],[120,757],[124,748],[129,745],[134,752],[138,758],[142,763],[147,763],[149,757]], true],
  [55, "#00e5ff", [[0,1177],[3,1166],[7,1164],[12,1160],[15,1142],[18,1112],[20,1086],[25,1043],[29,998],[32,975],[36,940],[41,877],[45,832],[48,790],[51,747],[54,714]]],
  [34, "#c0c0c0", [[0,1206],[4,1199],[7,1189],[10,1170],[12,1150],[16,1085],[18,1050],[20,1008],[22,968],[25,920],[28,872],[30,845],[33,822]]],
  [21, "#00ff00", [[0,1210],[2,1196],[4,1170],[6,1148],[8,1128],[10,1118],[12,1098],[14,1066],[16,1030],[18,960],[19,920]]],
  [13, "#ff00ff", [[0,1172],[3,1155],[5,1138],[7,1108],[9,1085],[11,1072]]],
  [8, "#ffff00", [[0,1168],[2,1148],[4,1128],[6,1106]]],
  [5, "#ffffff", [[0,1152],[1,1138],[2,1125],[3,1110]]]
];

const NS = "http://www.w3.org/2000/svg";
const AXIS = 59, RED = "#ff5c5c", CYAN = "#00ffff";
const closes = CANDLES.map(k => k[0] === "r" ? k[2] : k[3]);
const cx = i => 118.5 + 27.54 * i;

function average(values, n, seed) {
  const out = seed.filter(p => p[0] < n - 1).map(p => [cx(p[0]), p[1]]);
  for (let i = n - 1; i < values.length; i++) {
    let sum = 0;
    for (let j = i - n + 1; j <= i; j++) sum += values[j];
    out.push([cx(i), sum / n]);
  }
  return out;
}
const pairs = a => a.reduce((o, v, i) => (i % 2 ? o[o.length - 1].push(v) : o.push([v]), o), []);

function surface(id, top, units) {
  const svg = document.getElementById(id);
  svg.textContent = "";
  const box = svg.getBoundingClientRect(), W = box.width - AXIS, H = box.height;
  const x = v => Math.floor((v - 105) / 4158 * W);
  const y = v => Math.floor((v - top) / units * H);
  const add = (tag, attrs, text) => {
    const el = document.createElementNS(NS, tag);
    for (const k in attrs) el.setAttribute(k, attrs[k]);
    if (text) el.textContent = text;
    svg.appendChild(el);
    return el;
  };
  const path = (d, stroke, extra) => add("path", { d, stroke, fill: "none", "shape-rendering": "crispEdges", ...extra });
  const line = (pts, color) => path("M" + pts.map(p => (x(p[0]) + .5) + " " + (y(p[1]) + .5)).join("L"), color);
  const grid = (v, label, at) => {
    path(`M2 ${y(v) + .5}H${W - 3}`, "#555", { "stroke-dasharray": "1 3" });
    if (label) add("text", { x: W + 51, y: y(at || v) + 4, fill: "#858585", "text-anchor": "end" }, label);
  };
  const frame = () => path(`M${W + .5} 0V${H}M${W + 58.5} 0V${H}`, "#2c2c2c");
  return { add, path, line, grid, frame, x, y, W, H };
}

function drawPrice() {
  const s = surface("price", 144, 1149);
  s.frame();
  for (let p = 27; p >= 20; p--) s.grid(286 + (27 - p) * 123.8, p + ".00");
  const last = s.y(316);
  s.path(`M0 ${last + .5}H${s.W - 3}`, "#c8a000", { "stroke-dasharray": "5 3" });
  s.add("rect", { x: s.W + 2, y: last - 8, width: 54, height: 15, fill: "#242424", rx: 2 });
  s.add("text", { x: s.W + 51, y: last + 4, fill: "#d8a800", "text-anchor": "end" }, "26.76");
  CANDLES.forEach(([dir, h, t, b, l], i) => {
    const c = s.x(cx(i)), y1 = s.y(t), y2 = Math.max(s.y(b), y1 + 1), m = c + .5;
    if (dir === "r") {
      s.path(`M${m} ${s.y(h)}V${y1}M${m} ${y2}V${s.y(l)}M${c - 2.5} ${y1 + .5}h6V${y2 + .5}h-6z`, RED);
    } else {
      const color = dir === "w" ? "#fff" : CYAN;
      s.path(`M${m} ${s.y(h)}V${s.y(l)}`, color);
      s.add("rect", { x: c - 3, y: y1, width: 7, height: y2 - y1, fill: color });
    }
  });
  AVERAGES.forEach(([n, color, seed, whole]) =>
    s.line(whole ? seed.map(p => [cx(p[0]), p[1]]) : average(closes, n, seed), color));
  const hi = s.x(cx(49)), hy = s.y(213), ly = s.y(1168);
  s.path(`M${hi + 2} ${hy + .5}h14M${hi + 8} ${hy - 2.5}l-6 3l6 3M7 ${ly + .5}h11M13 ${ly - 2.5}l-6 3l6 3`, "#fff");
  s.add("text", { x: hi + 17, y: hy + 4, fill: "#fff" }, "27.60");
  s.add("text", { x: 21, y: ly + 3, fill: "#fff" }, "19.91");
  [778, 2458].forEach(v => {
    const c = s.x(v) + .5, m = s.y(166) + .5;
    s.add("path", { d: `M${c - 4.5} ${m}h9M${c} ${m - 4.5}v9M${c - 3} ${m - 3}l6 6M${c + 3} ${m - 3}l-6 6`, stroke: "#ccc" });
    s.add("circle", { cx: c, cy: m, r: 2.5, fill: "#ddd" });
  });
  [916, 1909, 2212].forEach(v => {
    const c = s.x(v) + .5, m = s.y(166);
    s.add("path", { d: `M${c} ${m - 4}l3 3h-1v3h1l-3 3l-3-3h1v-3h-1z`, fill: "#ddd" });
  });
  const sx = s.x(914);
  s.add("text", { x: sx, y: s.y(1286), fill: "#f00", "font-weight": 700, "text-anchor": "middle" }, "S");
  s.add("path", { d: `M${sx - 3} ${s.y(1261)}l3-3l3 3z`, fill: "#f00" });
}

function drawVolume() {
  const s = surface("volume", 105, 300);
  s.frame();
  s.grid(106, "22.70"); s.grid(208, "14.80"); s.grid(304, "7.50"); s.grid(400, "0.00", 378);
  const base = s.y(401);
  VOLUMES.forEach((v, i) => {
    const c = s.x(cx(i)), t = s.y(v);
    if (i && closes[i] > closes[i - 1]) s.add("rect", { x: c - 3, y: t, width: 7, height: base - t + 1, fill: CYAN });
    else s.path(`M${c - 2.5} ${t + .5}h6V${base + .5}h-6z`, RED);
  });
  s.line(average(VOLUMES, 5, [[0,341],[1,337],[2,340]]), "#ffff00");
  s.line(average(VOLUMES, 10, [[0,349],[4,344],[6,342],[8,325]]), "#ff00ff");
}

function drawMacd() {
  const s = surface("macd", 474, 267);
  s.frame();
  s.grid(478, "1.41"); s.grid(607, "0.36"); s.grid(736, "-0.69", 714);
  const zero = s.y(653);
  HIST.forEach((v, i) => {
    if (v === 653) return;
    s.path(`M${s.x(cx(i)) + .5} ${s.y(v)}V${zero}`, v < 653 ? "#ff3c3c" : CYAN);
  });
  s.line(pairs(DIF), "#ffffff");
  s.line(pairs(DEA), "#ffff00");
}

function drawDates() {
  const s = surface("dates", 0, 54);
  [[448, "08"], [1027, "09"], [1633, "10"], [2101, "11"], [2653, "12"], [3286, "2026"], [3836, "02"], [4223, "03"]].forEach(([v, t]) => {
    const c = s.x(v), year = t.length > 2;
    s.path(`M${c + .5} 0v3`, "#555");
    s.add("text", { x: c + 2, y: 13, fill: year ? "#fff" : "#808080", "font-weight": year ? 700 : 400 }, t);
  });
  const c = s.x(3586);
  s.add("rect", { x: c, y: 1, width: 90, height: 17, fill: "#2c2c2c", rx: 2 });
  s.add("text", { x: c + 45, y: 14, fill: "#ccc", "text-anchor": "middle" }, "2026/01/20/二");
}

function draw() { drawPrice(); drawVolume(); drawMacd(); drawDates(); }
draw();
addEventListener("resize", draw);
```
